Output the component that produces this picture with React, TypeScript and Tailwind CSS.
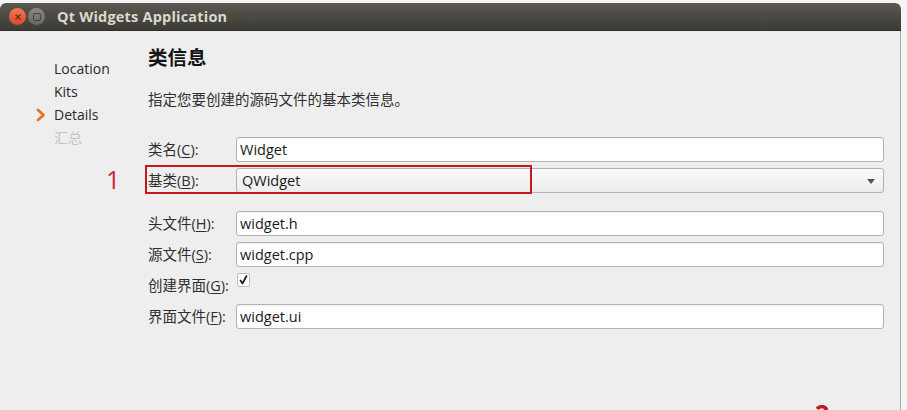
import React from "react";

const FONT = { fontFamily: '"Open Sans", "Noto Sans CJK SC", sans-serif' };

function Label({ pre, key1, post = "):" }: { pre: string; key1: string; post?: string }) {
  return (
    <span>
      {pre}(<span className="underline underline-offset-2">{key1}</span>{post}
    </span>
  );
}

function Input({ value }: { value: string }) {
  return (
    <div className="h-[25px] w-full rounded-[3px] border border-[#b3b3b3] bg-white pl-[3px] flex items-center text-[14.5px] text-[#1a1a1a] shadow-[inset_0_1px_1px_rgba(0,0,0,0.06)]">
      {value}
    </div>
  );
}

export default function App() {
  return (
    <div className="relative w-[907px] h-[410px] overflow-hidden bg-[#f4f4f4] pt-[3px] pr-[6px]" style={FONT}>
      <div className="flex h-full flex-col">
        {/* Title bar */}
        <div className="h-[28px] shrink-0 rounded-t-[6px] bg-gradient-to-b from-[#5a5850] to-[#3d3b36] flex items-center pl-[9px] border-b border-[#2f2e2a]">
          <div className="w-[17px] h-[17px] rounded-full bg-gradient-to-b from-[#f07a50] to-[#d9482a] flex items-center justify-center">
            <svg width="8" height="8" viewBox="0 0 8 8">
              <path d="M1.5 1.5 L6.5 6.5 M6.5 1.5 L1.5 6.5" stroke="#7a2a14" strokeWidth="1.4" />
            </svg>
          </div>
          <div className="ml-[2px] w-[17px] h-[17px] rounded-full bg-gradient-to-b from-[#8a8882] to-[#6a6862] flex items-center justify-center">
            <div className="w-[8px] h-[8px] rounded-[2px] border border-[#45433e]" />
          </div>
          <span className="ml-[12px] text-[14.5px] font-bold text-[#dcd8ce] tracking-[0.2px]">Qt Widgets Application</span>
        </div>
        {/* Content */}
        <div className="flex flex-1 bg-[#eeeeee] border-r border-[#a9a9a9]">
          {/* Sidebar */}
          <div className="w-[148px] shrink-0 pt-[26px] text-[14px] text-[#2a2a2a]">
            <div className="h-[23px] leading-[23px] pl-[54px]">Location</div>
            <div className="h-[23px] leading-[23px] pl-[54px]">Kits</div>
            <div className="h-[23px] leading-[23px] pl-[35px] flex items-center">
              <svg width="12" height="14" viewBox="0 0 12 14" className="mr-[7px]">
                <path d="M3 2 L8.5 7 L3 12" fill="none" stroke="#e07428" strokeWidth="2.8" strokeLinecap="round" strokeLinejoin="round" />
              </svg>
              Details
            </div>
            <div className="h-[23px] leading-[23px] pl-[54px] text-[#c4c4c4]">汇总</div>
          </div>
          {/* Main */}
          <div className="flex-1 pr-[16px] text-[#2e2e2e]">
            <div className="mt-[14px] h-[26px] leading-[26px] text-[19.5px] font-bold text-[#141414]">类信息</div>
            <div className="mt-[18px] h-[22px] leading-[22px] text-[14.5px]">指定您要创建的源码文件的基本类信息。</div>
            <div className="mt-[26px] flex flex-col text-[14.5px]">
              <div className="flex items-center h-[25px]">
                <div className="w-[88px] shrink-0"><Label pre="类名" key1="C" /></div>
                <Input value="Widget" />
              </div>
              <div className="mt-[6px] flex items-center h-[25px]">
                <div className="w-[88px] shrink-0"><Label pre="基类" key1="B" /></div>
                <div className="relative h-[25px] w-full rounded-[3px] border border-[#b3b3b3] bg-gradient-to-b from-[#fafafa] to-[#ececec] pl-[5px] flex items-center text-[14.5px] text-[#1a1a1a]">
                  QWidget
                  <svg width="8" height="5" viewBox="0 0 8 5" className="absolute right-[8px] top-[10px]">
                    <path d="M0 0 L8 0 L4 5 Z" fill="#555" />
                  </svg>
                </div>
              </div>
              <div className="mt-[18px] flex items-center h-[25px]">
                <div className="w-[88px] shrink-0"><Label pre="头文件" key1="H" /></div>
                <Input value="widget.h" />
              </div>
              <div className="mt-[6px] flex items-center h-[25px]">
                <div className="w-[88px] shrink-0"><Label pre="源文件" key1="S" /></div>
                <Input value="widget.cpp" />
              </div>
              <div className="mt-[6px] flex h-[25px]">
                <div className="w-[88px] shrink-0 pt-[2px]"><Label pre="创建界面" key1="G" /></div>
                <div className="ml-[1px] w-[13px] h-[14px] border border-[#bdbdbd] bg-white rounded-[2px] flex items-center justify-center">
                  <svg width="9" height="10" viewBox="0 0 9 10">
                    <path d="M1.5 5.5 L3.5 8.5 L7.5 1" fill="none" stroke="#111" strokeWidth="1.6" strokeLinecap="round" strokeLinejoin="round" />
                  </svg>
                </div>
              </div>
              <div className="mt-[6px] flex items-center h-[25px]">
                <div className="w-[88px] shrink-0"><Label pre="界面文件" key1="F" /></div>
                <Input value="widget.ui" />
              </div>
            </div>
          </div>
        </div>
      </div>
      {/* Annotations */}
      <div className="absolute left-[145px] top-[165px] w-[387px] h-[29px] border-2 border-[#c8161d]" />
      <div className="absolute left-[106px] top-[164px] text-[25px] leading-[30px] text-[#c52a2f]">1</div>
      <div className="absolute left-[815px] top-[398px] text-[25px] leading-[30px] text-[#c8161d] font-bold">2</div>
    </div>
  );
}
